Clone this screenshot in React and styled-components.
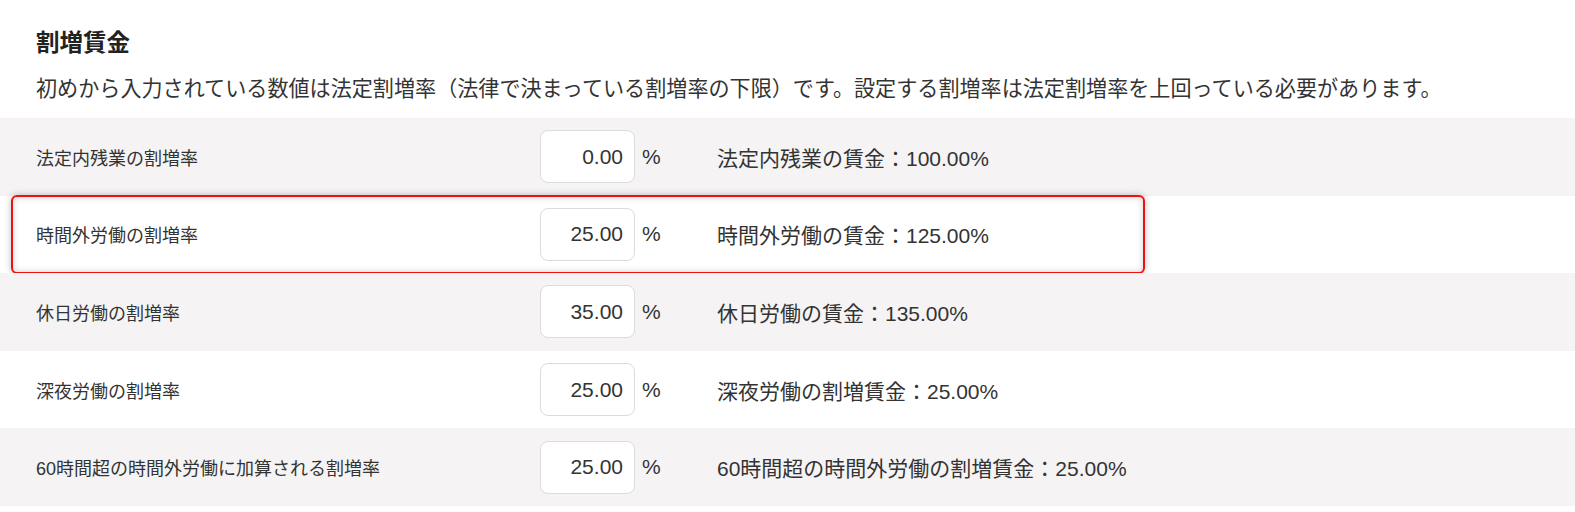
import React from "react";
import styled, { createGlobalStyle } from "styled-components";

const GlobalStyle = createGlobalStyle`
  body {
    margin: 0;
    background: #fff;
    font-family: "Liberation Sans", "Noto Sans CJK JP", sans-serif;
    color: #333;
  }
`;

const rates = [
  { label: "法定内残業の割増率", value: "0.00", result: "法定内残業の賃金：100.00%" },
  { label: "時間外労働の割増率", value: "25.00", result: "時間外労働の賃金：125.00%", marked: true },
  { label: "休日労働の割増率", value: "35.00", result: "休日労働の賃金：135.00%" },
  { label: "深夜労働の割増率", value: "25.00", result: "深夜労働の割増賃金：25.00%" },
  {
    label: "60時間超の時間外労働に加算される割増率",
    value: "25.00",
    result: "60時間超の時間外労働の割増賃金：25.00%",
  },
];

const App = () => {
  return (
    <Page>
      <GlobalStyle />
      <Header>
        <Title>割増賃金</Title>
        <Lead>
          初めから入力されている数値は法定割増率（法律で決まっている割増率の下限）です。設定する割増率は法定割増率を上回っている必要があります。
        </Lead>
      </Header>
      <RateList>
        {rates.map((item, i) => (
          <RateRow key={item.label} $striped={i % 2 === 0}>
            <RateLabel>{item.label}</RateLabel>
            <RateInput type="text" readOnly value={item.value} />
            <Unit>%</Unit>
            <Result>{item.result}</Result>
            {item.marked && <Highlight />}
          </RateRow>
        ))}
      </RateList>
    </Page>
  );
};

const Page = styled.main`
  width: 1575px;
`;

const Header = styled.header`
  padding: 28px 36px 0;
  margin-bottom: 14px;
`;

const Title = styled.h2`
  margin: 0;
  font-size: 23.5px;
  line-height: 30px;
  font-weight: 700;
  color: #222;
`;

const Lead = styled.p`
  margin: 16px 0 0;
  font-size: 21.1px;
  line-height: 30px;
  color: #333;
  white-space: nowrap;
`;

const RateList = styled.section`
  display: flex;
  flex-direction: column;
`;

const RateRow = styled.div`
  position: relative;
  display: flex;
  align-items: center;
  height: 77.6px;
  background: ${(p) => (p.$striped ? "#f5f3f4" : "#fff")};
`;

const RateLabel = styled.div`
  flex: 0 0 auto;
  box-sizing: border-box;
  width: 540px;
  padding-left: 36px;
  font-size: 18px;
  color: #333;
`;

const RateInput = styled.input`
  flex: 0 0 auto;
  box-sizing: border-box;
  width: 95px;
  height: 53px;
  padding: 0 11px 0 0;
  border: 1px solid #dcdcdc;
  border-radius: 8px;
  background: #fff;
  text-align: right;
  font-family: "Liberation Sans", sans-serif;
  font-size: 21px;
  color: #333;
  outline: none;
`;

const Unit = styled.span`
  flex: 0 0 auto;
  box-sizing: border-box;
  width: 82px;
  padding-left: 7px;
  font-size: 21px;
  color: #333;
`;

const Result = styled.div`
  font-size: 21px;
  color: #333;
  white-space: nowrap;
`;

const Highlight = styled.div`
  position: absolute;
  left: 11px;
  top: -1px;
  width: 1134px;
  bottom: -1px;
  box-sizing: border-box;
  border: 2px solid #f01010;
  border-radius: 6px;
  box-shadow: 0 0 7px rgba(0, 0, 0, 0.25), inset 0 0 7px rgba(0, 0, 0, 0.18);
  pointer-events: none;
`;

export default App;
